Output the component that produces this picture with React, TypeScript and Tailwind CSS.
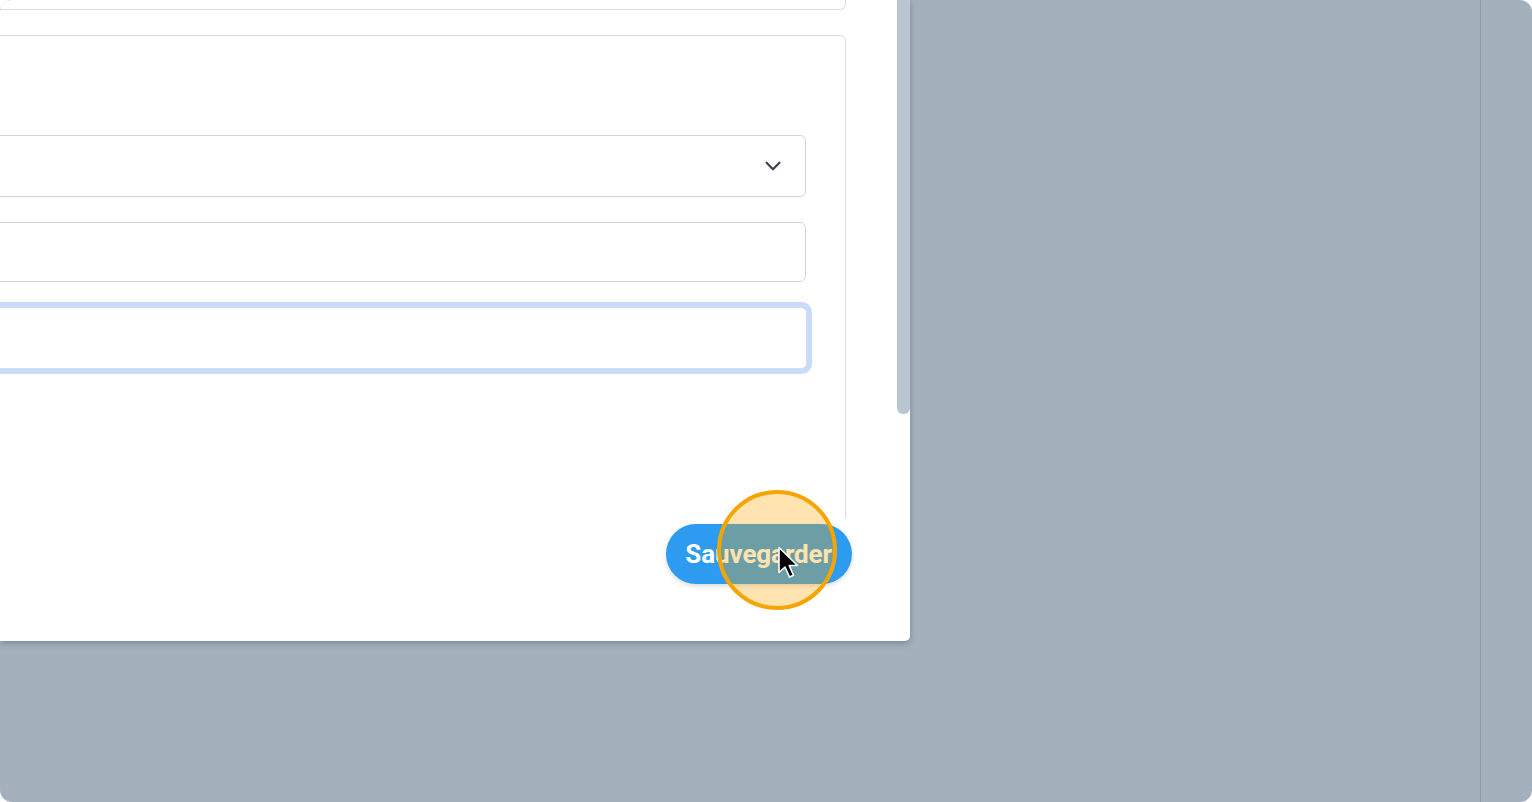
import React from 'react';

const Chevron = () => (
  <svg width="22" height="22" viewBox="0 0 24 24" fill="none" stroke="#3b4450" strokeWidth="2.4" strokeLinecap="round" strokeLinejoin="round">
    <path d="M5 8.5l7 7 7-7" />
  </svg>
);

const Cursor = () => (
  <svg width="24" height="34" viewBox="0 0 24 34">
    <path d="M2 1.5v25l6-5.5 4.5 10 4-1.8-4.3-9.7h8.3z" fill="#000" stroke="#fff" strokeWidth="1.6" strokeLinejoin="round" />
  </svg>
);

const App = () => {
  return (
    <div className="bg-white w-[1532px] h-[802px]" style={{ fontFamily: 'Roboto, "Noto Sans", sans-serif' }}>
      <div className="relative w-full h-full rounded-[12px] overflow-hidden bg-[#a4b1bd] flex">
        {/* page behind the overlay */}
        <div className="flex-1" />
        <div className="w-[52px] border-l border-[#8e9cab]" />

        {/* modal */}
        <div className="absolute left-0 top-0 w-[910px] h-[641px] bg-white rounded-br-[5px] shadow-[0_2px_6px_rgba(40,55,70,0.35)] flex">
          <div className="flex-1 flex flex-col overflow-hidden">
            <div className="h-[518px] overflow-hidden pr-[51px]">
              <div className="h-[10px] border border-t-0 border-[#dcdcdc] rounded-b-[6px] -ml-[20px]" />
              <div className="mt-[25px] h-[520px] border border-[#dcdcdc] rounded-t-[6px] -ml-[20px] pr-[39px] pt-[99px] flex flex-col">
                <div className="h-[62px] border border-[#d4d4d4] rounded-[6px] flex items-center justify-end pr-[21px]">
                  <Chevron />
                </div>
                <div className="mt-[25px] h-[60px] border border-[#d4d4d4] rounded-[6px]" />
                <div className="mt-[20px] -mr-[6px] h-[72px] rounded-[10px] bg-[#c9dbfb] p-[5px]">
                  <div className="h-full rounded-[6px] border border-[#d8dde4] bg-white" />
                </div>
              </div>
            </div>
            <div className="flex-1 flex justify-end items-start pt-[6px] pr-[45px]">
              <button className="relative h-[60px] pl-[19px] pr-[20px] rounded-full bg-[#2d9cf0] text-white font-bold text-[26px] tracking-[-0.1px] shadow-[0_2px_5px_rgba(0,0,0,0.15)]">
                Sauvegarder
                <span className="absolute left-[51px] top-[-34px] w-[120px] h-[120px] rounded-full border-4 border-[#f6a500] bg-[rgba(255,165,0,0.31)]" />
                <span className="absolute left-[111px] top-[22px]">
                  <Cursor />
                </span>
              </button>
            </div>
          </div>
          {/* scrollbar */}
          <div className="w-[13px] h-full">
            <div className="h-[414px] bg-[#b9c5cf] rounded-b-[6px]" />
          </div>
        </div>
      </div>
    </div>
  );
};

export default App;
